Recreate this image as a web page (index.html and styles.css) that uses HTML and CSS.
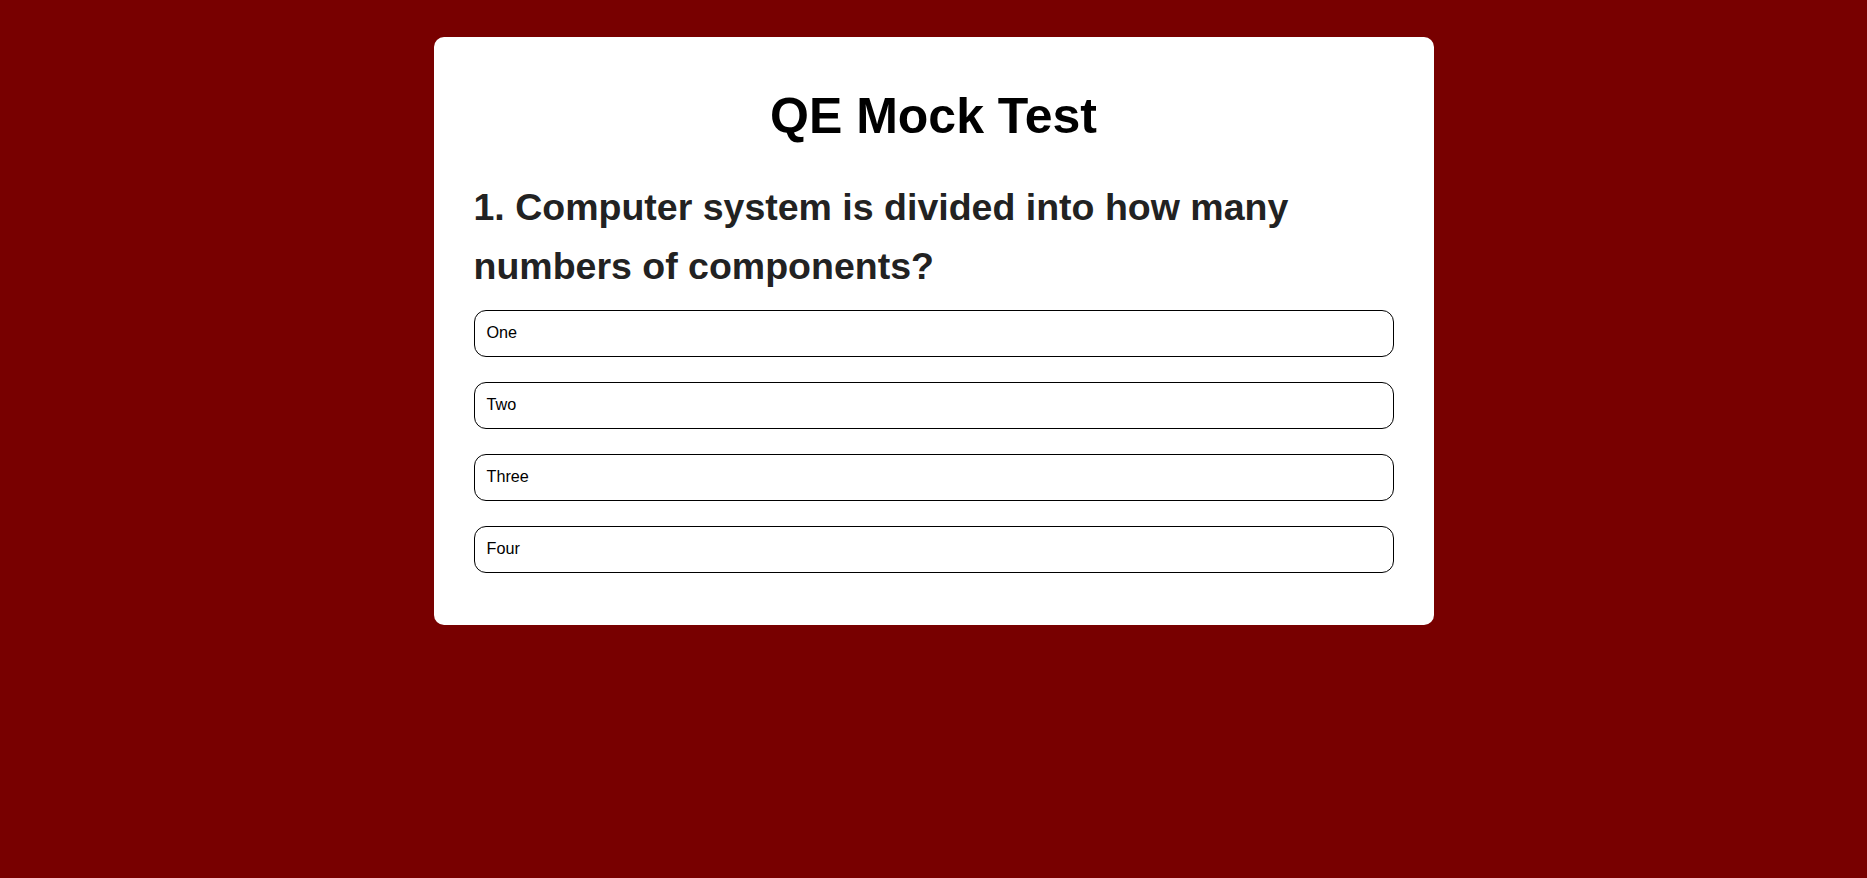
FILE: index.html
```html
<!DOCTYPE html>
<html lang="en">
<head>
<meta charset="utf-8">
<title>QE Mock Test</title>
<link rel="stylesheet" href="styles.css">
</head>
<body>
<main class="quiz">
  <h1 class="quiz-title">QE Mock Test</h1>
  <h2 class="question">1. Computer system is divided into how many numbers of components?</h2>
  <div class="options">
    <div class="option">One</div>
    <div class="option">Two</div>
    <div class="option">Three</div>
    <div class="option">Four</div>
  </div>
</main>
</body>
</html>
```
FILE: styles.css
```css
html, body {
  margin: 0;
  padding: 0;
}
body {
  background: #780000;
  font-family: "Liberation Sans", Arial, sans-serif;
  padding-top: 37px;
  min-height: 100vh;
  box-sizing: border-box;
}
.quiz {
  width: 1000px;
  box-sizing: border-box;
  margin: 0 auto;
  background: #fff;
  border-radius: 10px;
  padding: 50px 40px 52px;
  display: flex;
  flex-direction: column;
}
.quiz-title {
  margin: 0;
  font-size: 50px;
  line-height: normal;
  font-weight: 700;
  color: #000;
  text-align: center;
}
.question {
  margin: 32.5px 0 13.7px;
  font-size: 37.5px;
  line-height: 59.5px;
  font-weight: 700;
  color: #222;
}
.options {
  display: flex;
  flex-direction: column;
  gap: 25px;
}
.option {
  border: 1px solid #000;
  border-radius: 12px;
  padding: 11px 12px 13px;
  font-size: 16.2px;
  line-height: 21px;
  color: #000;
}
```
